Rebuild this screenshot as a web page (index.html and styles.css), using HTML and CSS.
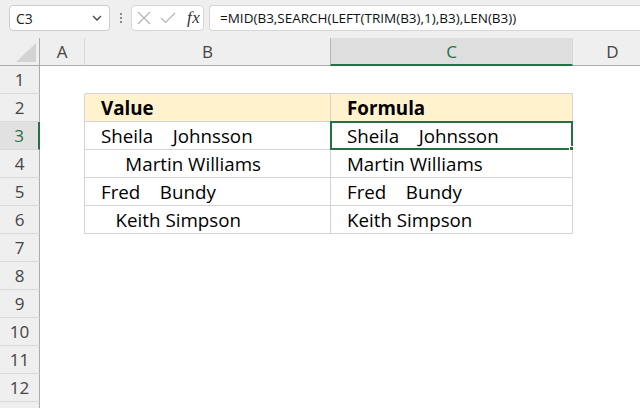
FILE: index.html
```html
<!DOCTYPE html>
<html>
<head>
<meta charset="utf-8">
<link rel="stylesheet" href="styles.css">
</head>
<body>
<div class="app">
  <div class="fbar">
    <div class="namebox">
      <span class="nb-text">C3</span>
      <svg class="chev" width="10" height="6" viewBox="0 0 10 6"><path d="M1 1 L5 5 L9 1" fill="none" stroke="#444" stroke-width="1.3"/></svg>
    </div>
    <div class="dots"><i></i><i></i><i></i></div>
    <div class="fxbox">
      <svg width="14" height="14" viewBox="0 0 14 14"><path d="M1 1 L13 13 M13 1 L1 13" stroke="#b4b4b4" stroke-width="1.2" fill="none"/></svg>
      <svg width="16" height="12" viewBox="0 0 16 12"><path d="M1 6 L5.5 10.5 L15 1" stroke="#b4b4b4" stroke-width="1.2" fill="none"/></svg>
      <span class="fx">fx</span>
    </div>
    <div class="formula">=MID(B3,SEARCH(LEFT(TRIM(B3),1),B3),LEN(B3))</div>
  </div>
  <div class="sheet">
    <div class="corner"><svg width="20" height="19" viewBox="0 0 20 19"><polygon points="20,0 20,19 0,19" fill="#d3d3d3"/></svg></div>
    <div class="ch">A</div>
    <div class="ch">B</div>
    <div class="ch sel">C</div>
    <div class="ch">D</div>

    <div class="rh">1</div><div class="c"></div><div class="c tb"></div><div class="c tb"></div><div class="c"></div>

    <div class="rh">2</div><div class="c tr"></div><div class="c t hd">Value</div><div class="c t hd">Formula</div><div class="c"></div>

    <div class="rh rsel">3</div><div class="c tr"></div><div class="c t">Sheila    Johnsson</div><div class="c t active">Sheila    Johnsson<span class="selbox"></span><span class="handle"></span></div><div class="c"></div>

    <div class="rh">4</div><div class="c tr"></div><div class="c t">     Martin Williams</div><div class="c t">Martin Williams</div><div class="c"></div>

    <div class="rh">5</div><div class="c tr"></div><div class="c t">Fred    Bundy</div><div class="c t">Fred    Bundy</div><div class="c"></div>

    <div class="rh">6</div><div class="c tr"></div><div class="c t">   Keith Simpson</div><div class="c t">Keith Simpson</div><div class="c"></div>

    <div class="rh">7</div><div class="c"></div><div class="c"></div><div class="c"></div><div class="c"></div>
    <div class="rh">8</div><div class="c"></div><div class="c"></div><div class="c"></div><div class="c"></div>
    <div class="rh">9</div><div class="c"></div><div class="c"></div><div class="c"></div><div class="c"></div>
    <div class="rh">10</div><div class="c"></div><div class="c"></div><div class="c"></div><div class="c"></div>
    <div class="rh">11</div><div class="c"></div><div class="c"></div><div class="c"></div><div class="c"></div>
    <div class="rh">12</div><div class="c"></div><div class="c"></div><div class="c"></div><div class="c"></div>
    <div class="rh"></div><div class="c"></div><div class="c"></div><div class="c"></div><div class="c"></div>
  </div>
</div>
</body>
</html>
```
FILE: styles.css
```css
* { box-sizing: border-box; }
html, body { margin: 0; padding: 0; }
body {
  width: 640px;
  height: 408px;
  overflow: hidden;
  background: #fff;
  font-family: "Open Sans", "Liberation Sans", sans-serif;
}
.app { width: 640px; height: 408px; overflow: hidden; }

.fbar {
  height: 38px;
  background: #efefef;
  display: flex;
  align-items: flex-start;
  padding: 5px 0 0 9px;
  white-space: nowrap;
}
.namebox {
  width: 101px;
  height: 26px;
  background: #fff;
  border: 1px solid #cdcdcd;
  border-radius: 4px;
  display: flex;
  align-items: center;
  justify-content: space-between;
  padding: 0 7px 0 6px;
}
.nb-text { font-size: 14px; color: #222; }
.chev { display: block; }
.dots {
  width: 21px;
  height: 26px;
  display: flex;
  flex-direction: column;
  align-items: center;
  justify-content: center;
  gap: 2px;
}
.dots i {
  display: block;
  width: 2px;
  height: 2px;
  background: #8a8a8a;
}
.fxbox {
  width: 73px;
  height: 26px;
  background: #fff;
  border: 1px solid #d6d6d6;
  border-radius: 4px;
  display: flex;
  align-items: center;
  padding: 0 0 0 5px;
  gap: 9px;
}
.fxbox svg { display: block; }
.fx {
  font-family: "Liberation Serif", "DejaVu Serif", serif;
  font-style: italic;
  font-size: 17px;
  color: #333;
  margin-left: 2px;
  letter-spacing: 0.5px;
}
.formula {
  margin-left: 5px;
  flex: 1;
  height: 26px;
  background: #fff;
  border: 1px solid #d6d6d6;
  border-right: none;
  border-radius: 4px 0 0 4px;
  font-size: 13.5px;
  line-height: 24px;
  padding-left: 10px;
  color: #111;
}

.sheet {
  display: grid;
  grid-template-columns: 40px 45px 246px 242px 80px;
  grid-auto-rows: 28px;
}
.corner {
  background: #efefef;
  border-right: 1px solid #ababab;
  border-bottom: 1px solid #ababab;
  display: flex;
  align-items: flex-end;
  justify-content: flex-end;
  padding: 0 3px 3px 0;
}
.corner svg { display: block; }
.ch {
  background: #efefef;
  border-right: 1px solid #d8d8d8;
  border-bottom: 1px solid #ababab;
  text-align: center;
  font-size: 17px;
  line-height: 27px;
  color: #444;
}
.ch.sel {
  background: #dedede;
  border-left: 1px solid #b8b8b8;
  margin-left: -1px;
  border-bottom: 2px solid #217346;
  color: #217346;
}
.rh {
  background: #efefef;
  border-right: 1px solid #ababab;
  border-bottom: 1px solid #dadada;
  text-align: center;
  font-size: 17px;
  line-height: 27px;
  color: #444;
}
.rh.rsel {
  background: #e1e1e1;
  border-right: 2px solid #217346;
  color: #217346;
}
.c {
  position: relative;
  background: #fff;
  white-space: pre;
  font-size: 18.75px;
  line-height: 27px;
  padding-left: 16px;
  color: #000;
  overflow: visible;
}
.tb { border-bottom: 1px solid #d4d4d4; }
.tr { border-right: 1px solid #d4d4d4; }
.t {
  border-right: 1px solid #d4d4d4;
  border-bottom: 1px solid #d4d4d4;
}
.hd {
  background: #fff2cc;
  font-weight: 700;
}
.selbox {
  position: absolute;
  left: -1px;
  top: -1px;
  right: -1px;
  bottom: -1px;
  border: 2px solid #217346;
}
.handle {
  position: absolute;
  right: -4px;
  bottom: -4px;
  width: 7px;
  height: 7px;
  background: #217346;
  border: 1px solid #fff;
}
```
